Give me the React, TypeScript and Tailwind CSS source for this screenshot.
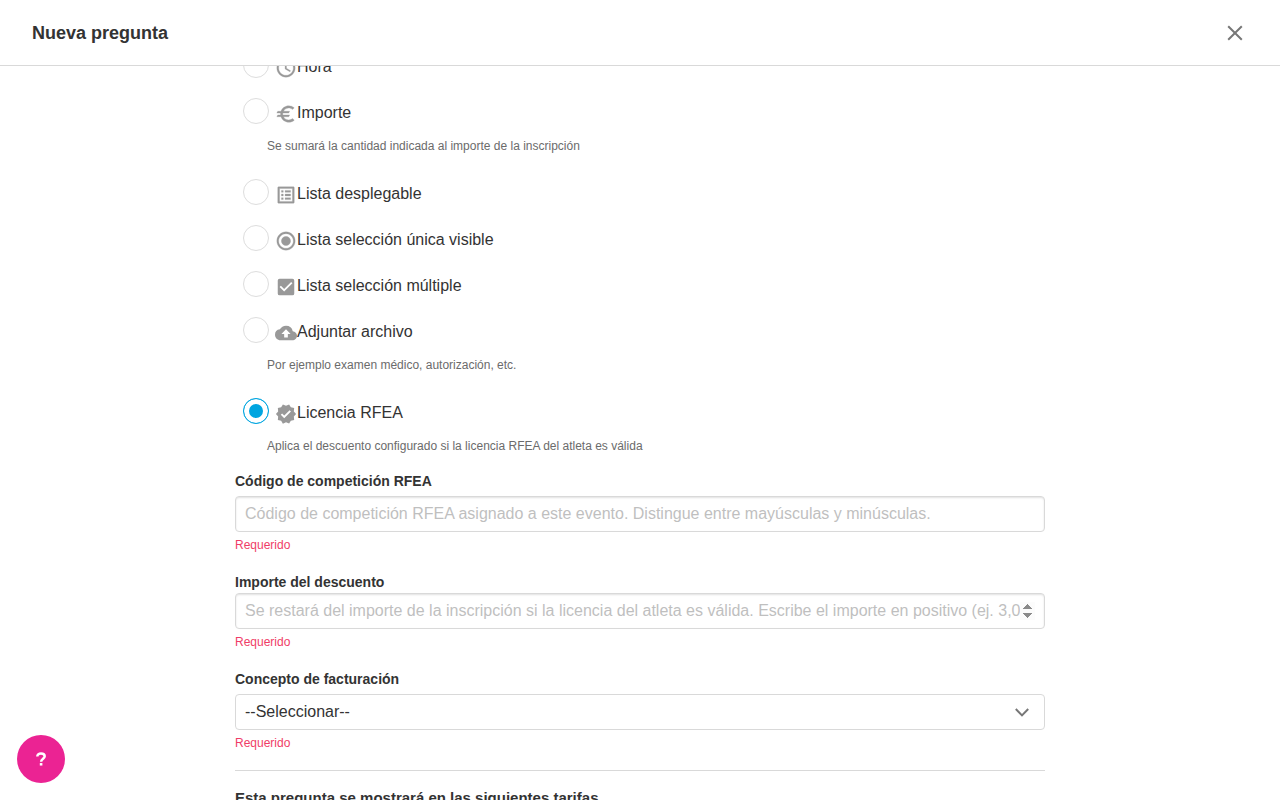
import { useState } from 'react';
import type { ReactNode } from 'react';
import type { IconType } from 'react-icons';
import {
  MdAccessTime,
  MdBackup,
  MdCheckBox,
  MdEuro,
  MdOutlineListAlt,
  MdRadioButtonChecked,
  MdVerified,
} from 'react-icons/md';

interface QuestionType {
  id: string;
  label: string;
  icon: IconType;
  // thin line icons get a slightly heavier stroke
  thin?: boolean;
  note?: string;
}

const QUESTION_TYPES: QuestionType[] = [
  { id: 'time', label: 'Hora', icon: MdAccessTime, thin: true },
  { id: 'amount', label: 'Importe', icon: MdEuro, thin: true, note: 'Se sumará la cantidad indicada al importe de la inscripción' },
  { id: 'dropdown', label: 'Lista desplegable', icon: MdOutlineListAlt, thin: true },
  { id: 'single', label: 'Lista selección única visible', icon: MdRadioButtonChecked, thin: true },
  { id: 'multiple', label: 'Lista selección múltiple', icon: MdCheckBox },
  { id: 'file', label: 'Adjuntar archivo', icon: MdBackup, note: 'Por ejemplo examen médico, autorización, etc.' },
  { id: 'rfea', label: 'Licencia RFEA', icon: MdVerified, note: 'Aplica el descuento configurado si la licencia RFEA del atleta es válida' },
];

const CONTROL = 'block h-9 w-full rounded border border-[#d9d9d9] bg-white px-[9px] text-base text-[#333] outline-none focus:border-[#00a5e0]';
const INSET = 'shadow-[inset_0_1px_2px_rgba(0,0,0,0.12)] placeholder:text-[#bfbfbf]';

const ICON = 'mt-0.5 size-[22px] text-[#999]';
const THIN_ICON = 'mt-0.5 size-[22px] stroke-[0.3] text-[#999] [&>path[fill=none]]:stroke-none';

function TypeOption({ type, checked, onSelect }: { type: QuestionType; checked: boolean; onSelect: () => void }) {
  const Icon = type.icon;
  return (
    <li className="pb-[19px] pl-2 last:pb-0">
      <label className="flex h-[27px] items-start gap-1.5">
        <input
          type="radio"
          name="questionType"
          value={type.id}
          checked={checked}
          onChange={onSelect}
          className="size-[26px] shrink-0 appearance-none rounded-full border border-[#ddd] bg-white checked:border-[#00a5e0] checked:bg-[#00a5e0] checked:shadow-[inset_0_0_0_5px_#fff]"
        />
        <span className="flex items-start pt-[3px]">
          <Icon className={type.thin ? THIN_ICON : ICON} aria-hidden="true" />
          {type.label}
        </span>
      </label>
      {type.note && <p className="mt-[13px] mb-1.5 pl-6 text-xs text-[#6b6b6b]">{type.note}</p>}
    </li>
  );
}

function Field({ id, label, tight, children }: { id: string; label: string; tight?: boolean; children: ReactNode }) {
  return (
    <div>
      <label htmlFor={id} className={tight ? 'mb-px block text-sm font-bold' : 'mb-[5px] block text-sm font-bold'}>
        {label}
      </label>
      {children}
      <p className="mt-[5px] text-xs text-[#ef3d67]">Requerido</p>
    </div>
  );
}

export default function App() {
  const [selected, setSelected] = useState('rfea');
  const [code, setCode] = useState('');
  const [discount, setDiscount] = useState('');

  return (
    <div className="flex h-screen flex-col overflow-hidden bg-white font-['Liberation_Sans',Arial,sans-serif] text-base text-[#333]">
      <header className="z-10 flex shrink-0 items-center justify-between border-b border-[#d9d9d9] bg-white px-8 py-[18px]">
        <h1 className="pt-0.5 text-lg leading-[27px] font-bold">Nueva pregunta</h1>
        <button type="button" aria-label="Cerrar" className="flex size-[26px] items-center justify-center text-[#777]">
          <svg viewBox="0 0 16 16" className="size-4" fill="none" stroke="currentColor" strokeWidth="2">
            <path d="M1.2 1.2l13.6 13.6M14.8 1.2L1.2 14.8" />
          </svg>
        </button>
      </header>

      <main className="min-h-0 flex-1 px-6">
        <form className="mx-auto -mt-3.5 max-w-[810px]">
          <ul>
            {QUESTION_TYPES.map(type => (
              <TypeOption
                key={type.id}
                type={type}
                checked={selected === type.id}
                onSelect={() => setSelected(type.id)}
              />
            ))}
          </ul>

          <div className="mt-[17px] flex flex-col gap-[19px]">
            <Field id="code" label="Código de competición RFEA">
              <input
                id="code"
                type="text"
                value={code}
                onChange={e => setCode(e.target.value)}
                placeholder="Código de competición RFEA asignado a este evento. Distingue entre mayúsculas y minúsculas."
                className={`${CONTROL} ${INSET}`}
              />
            </Field>
            <Field id="discount" label="Importe del descuento" tight>
              <input
                id="discount"
                type="number"
                value={discount}
                onChange={e => setDiscount(e.target.value)}
                placeholder="Se restará del importe de la inscripción si la licencia del atleta es válida. Escribe el importe en positivo (ej. 3,00)"
                className={`${CONTROL} ${INSET} [&::-webkit-inner-spin-button]:opacity-100`}
              />
            </Field>
            <Field id="concept" label="Concepto de facturación">
              <div className="relative">
                <select id="concept" className={`${CONTROL} appearance-none`}>
                  <option>--Seleccionar--</option>
                </select>
                <svg
                  viewBox="0 0 14 9"
                  className="pointer-events-none absolute top-3.5 right-4 h-[9px] w-3.5 text-[#777]"
                  fill="none"
                  stroke="currentColor"
                  strokeWidth="2"
                >
                  <path d="M.8 1L7 7.4 13.2 1" />
                </svg>
              </div>
            </Field>
          </div>

          <hr className="mt-[19px] border-[#d9d9d9]" />
          <h2 className="mt-[17px] text-[15px] leading-5 font-bold">Esta pregunta se mostrará en las siguientes tarifas</h2>
        </form>
      </main>

      <button
        type="button"
        aria-label="Ayuda"
        className="fixed bottom-[17px] left-[17px] z-20 flex size-12 items-center justify-center rounded-full bg-[#eb2393] text-white"
      >
        <svg viewBox="0 0 10 14" className="h-3.5 w-2.5" fill="none" stroke="currentColor" strokeWidth="2.5">
          <path d="M1.3 4.4C1.3 2.5 2.9 1.4 5 1.4s3.7 1.1 3.7 2.9C8.7 6.7 5.1 6.7 5.1 9.7" />
          <path d="M3.8 12.3h2.6" />
        </svg>
      </button>
    </div>
  );
}
